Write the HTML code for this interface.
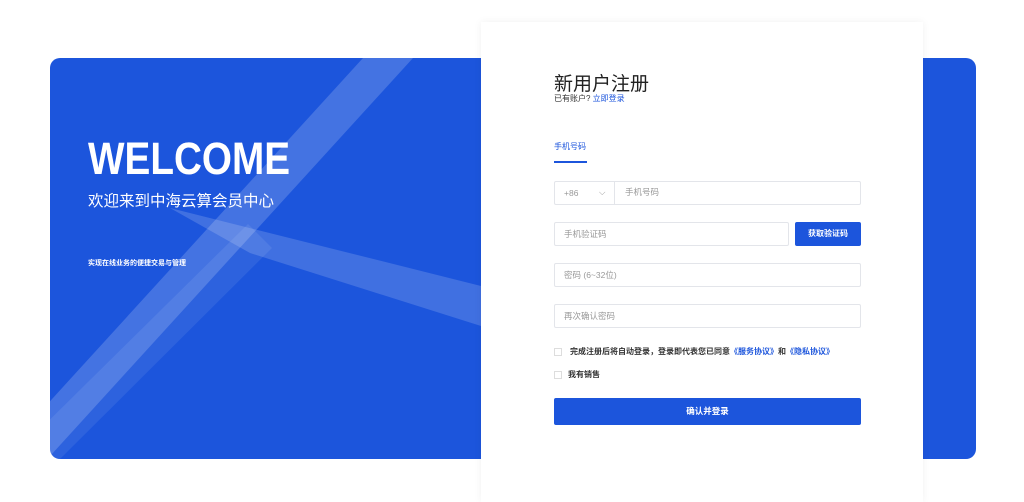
<!DOCTYPE html>
<html><head><meta charset="utf-8"><style>
*{margin:0;padding:0;box-sizing:border-box}
body{width:1024px;height:494px;background:#fff;font-family:"Liberation Sans","Noto Sans CJK SC",sans-serif;position:relative;overflow:hidden}
.blue{position:absolute;left:50px;top:58px;width:926px;height:401px;background:#1c55dc;border-radius:10px;overflow:hidden}
.card{position:absolute;left:481px;top:22px;width:442px;height:480px;background:#fff;box-shadow:0 0 8px rgba(0,0,0,.06)}
.inp{position:absolute;height:24px;border:1px solid #e3e5ea;border-radius:2px;font-size:8.5px;color:#999;line-height:22px;padding-left:9px}
</style></head><body>
<div class="blue">
<svg width="926" height="401" style="position:absolute;left:0;top:0">
<polygon points="313,0 363,0 -20,420 -70,420" fill="#fff" opacity="0.18"/>
<polygon points="198,166 222,190 10,401 -40,401" fill="#fff" opacity="0.08"/>
<polygon points="120,150 431,228 431,268 200,195" fill="#fff" opacity="0.16"/>
</svg>
<div style="position:absolute;left:38px;top:76px;color:#fff;font-size:45px;font-weight:bold;line-height:50px;transform:scaleX(0.86);transform-origin:0 0">WELCOME</div>
<div style="position:absolute;left:38px;top:131px;color:#fff;font-size:15.5px">欢迎来到中海云算会员中心</div>
<div style="position:absolute;left:38px;top:200px;color:#fff;font-size:7px;font-weight:bold">实现在线业务的便捷交易与管理</div>
</div>
<div class="card"></div>
<div style="position:absolute;left:554px;top:69px;font-size:19px;color:#222">新用户注册</div>
<div style="position:absolute;left:554px;top:93px;font-size:8px;color:#333">已有账户? <span style="color:#1c55dc">立即登录</span></div>
<div style="position:absolute;left:554px;top:141px;font-size:8px;color:#1c55dc">手机号码</div>
<div style="position:absolute;left:554px;top:161px;width:33px;height:2px;background:#1c55dc"></div>
<div class="inp" style="left:554px;top:181px;width:307px">+86<span style="position:absolute;left:44px;top:-1px;color:#999">⌵</span><span style="position:absolute;left:59px;top:-1px;bottom:-1px;border-left:1px solid #e3e5ea;padding-left:10px">手机号码</span></div>
<div class="inp" style="left:554px;top:222px;width:235px">手机验证码</div>
<div style="position:absolute;left:795px;top:222px;width:66px;height:24px;background:#1c55dc;border-radius:2px;color:#fff;font-size:8px;font-weight:bold;text-align:center;line-height:24px">获取验证码</div>
<div class="inp" style="left:554px;top:263px;width:307px">密码 (6~32位)</div>
<div class="inp" style="left:554px;top:304px;width:307px">再次确认密码</div>
<div style="position:absolute;left:554px;top:348px;width:8px;height:8px;border:1px solid #ddd"></div>
<div style="position:absolute;left:570px;top:346px;font-size:8px;color:#333;font-weight:bold">完成注册后将自动登录，登录即代表您已同意<span style="color:#1c55dc">《服务协议》</span>和<span style="color:#1c55dc">《隐私协议》</span></div>
<div style="position:absolute;left:554px;top:371px;width:8px;height:8px;border:1px solid #ddd"></div>
<div style="position:absolute;left:568px;top:369px;font-size:8px;color:#333;font-weight:bold">我有销售</div>
<div style="position:absolute;left:554px;top:398px;width:307px;height:27px;background:#1c55dc;border-radius:2px;color:#fff;font-size:8.5px;font-weight:bold;text-align:center;line-height:27px">确认并登录</div>
</body></html>
